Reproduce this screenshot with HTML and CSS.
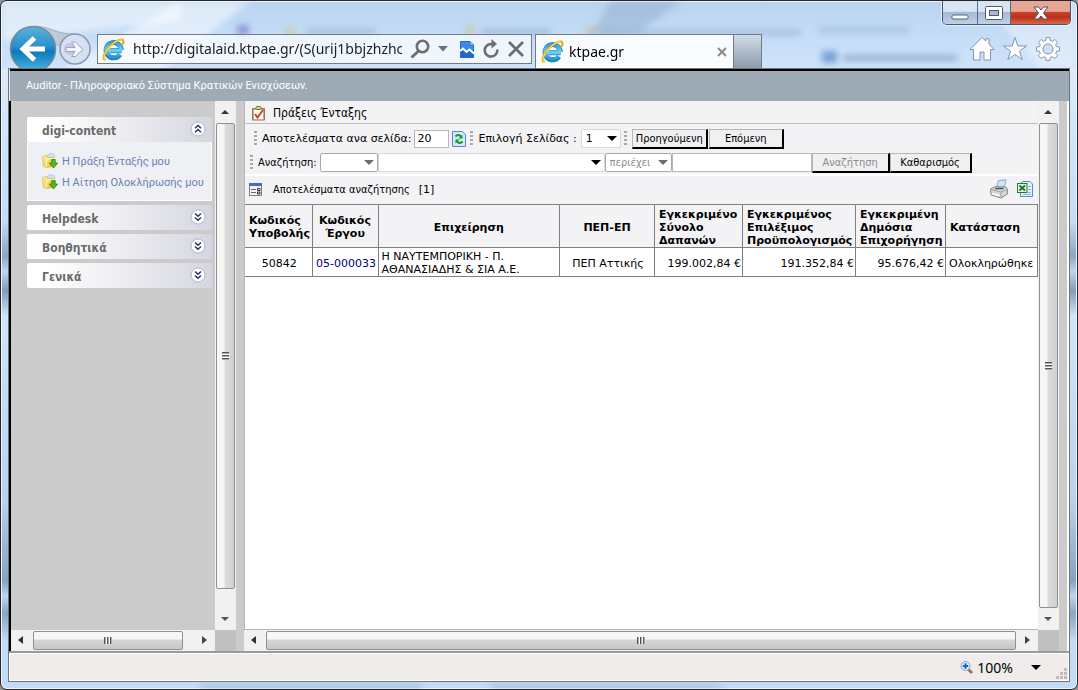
FILE: index.html
```
<!DOCTYPE html>
<html lang="el">
<head>
<meta charset="utf-8">
<title>ktpae.gr</title>
<link rel="stylesheet" href="styles.css">
</head>
<body>
<svg class="defs" aria-hidden="true">
  <defs>
    <linearGradient id="eblue" x1="0" y1="0" x2="0" y2="1"><stop offset="0" stop-color="#2f9bd8"/><stop offset=".5" stop-color="#6fd6f8"/><stop offset="1" stop-color="#2a93d4"/></linearGradient>
    <linearGradient id="folder" x1="0" y1="0" x2="1" y2="1"><stop offset="0" stop-color="#fff3a0"/><stop offset="1" stop-color="#e6b42c"/></linearGradient>
    <filter id="soft" x="-50%" y="-100%" width="200%" height="300%"><feGaussianBlur stdDeviation="3"/></filter>
    <symbol id="ie" viewBox="0 0 24 24">
      <path d="M20.4 13.3H8M20.2 12.5a8 8 0 1 0-1.4 4.8" fill="none" stroke="#1d7fc0" stroke-width="5"/>
      <path d="M20.2 13.2H8M19.8 12.5a7.7 7.7 0 1 0-1.6 4.4" fill="none" stroke="url(#eblue)" stroke-width="3.6"/>
      <path d="M8 13.2H20" fill="none" stroke="#62cdf4" stroke-width="3"/>
      <path d="M4.2 22.2C1 23.6.6 19.6 4 14 8 7.400 16.500.9 20.800 1.600 23 2 22.600 4.800 21.600 6.800" fill="none" stroke="#e9a500" stroke-width="2.200"/>
      <path d="M4.200 22C1.400 23 1.200 19.400 4.200 14.200 8 7.600 16.500 1.300 20.600 1.800" fill="none" stroke="#ffd94a" stroke-width="1.200"/>
    </symbol>
    <symbol id="folder-down" viewBox="0 0 16 16">
      <circle cx="9" cy="4.500" r="4" fill="#cfe4f5" stroke="#9fc3e2" stroke-width=".6"/>
      <path d="M.6 3.500 4.800 2.400 6 4.200 12.500 4.600 13 13 4 14.800 1.200 13Z" fill="url(#folder)" stroke="#d8ae34" stroke-width=".6"/>
      <path d="M4 14.500 5 6 13.500 5.500" fill="none" stroke="#fffbd0" stroke-width="1"/>
      <path d="M9.700 6.500H13.200V10H15.800L11.500 15 7.200 10H9.700Z" fill="#58b51c" stroke="#2f7d0c" stroke-width=".7"/>
    </symbol>
    <symbol id="chev-down" viewBox="0 0 16 16">
      <circle cx="8" cy="8" r="7" fill="#fff" stroke="#b4b4c6"/>
      <path d="M5 4.500 8 7.300 11 4.500M5 8.500 8 11.300 11 8.500" fill="none" stroke="#22336e" stroke-width="1.500"/>
    </symbol>
    <symbol id="chev-up" viewBox="0 0 16 16">
      <circle cx="8" cy="8" r="7" fill="#fff" stroke="#b4b4c6"/>
      <path d="M5 7.300 8 4.500 11 7.300M5 11.300 8 8.500 11 11.300" fill="none" stroke="#22336e" stroke-width="1.500"/>
    </symbol>
  </defs>
</svg>

<div class="window">
  <svg class="haze" aria-hidden="true">
    <g filter="url(#soft)">
      <path d="M180 0 250 0 160 70 60 70Z" fill="#fff" opacity=".5"/>
      <path d="M610 0 680 0 640 30 590 34Z" fill="#6f8db5" opacity=".3"/>
      <path d="M0 0H180V20L0 40Z" fill="#fff" opacity=".5"/>
      <path d="M980 0H1076V68H1040Z" fill="#fff" opacity=".35"/>
      <rect x="236" y="24" width="12" height="10" fill="#6a5fc0" opacity=".55"/>
      <rect x="284" y="27" width="10" height="8" fill="#cdbb6a" opacity=".5"/>
      <rect x="305" y="28" width="70" height="5" fill="#6887ab" opacity=".35"/>
      <rect x="464" y="26" width="10" height="8" fill="#c7b766" opacity=".5"/>
      <rect x="480" y="28" width="70" height="5" fill="#6887ab" opacity=".4"/>
      <rect x="584" y="26" width="12" height="8" fill="#bfae62" opacity=".45"/>
      <rect x="600" y="29" width="200" height="5" fill="#6887ab" opacity=".35"/>
      <rect x="818" y="26" width="90" height="6" fill="#6887ab" opacity=".25"/>
      <rect x="821" y="50" width="15" height="12" fill="#3f78c0" opacity=".6"/>
      <rect x="842" y="54" width="114" height="6" fill="#587ba5" opacity=".45"/>
      <rect x="200" y="684" width="220" height="4" fill="#5f7c9c" opacity=".4"/>
      <rect x="490" y="684" width="230" height="4" fill="#5f7c9c" opacity=".35"/>
    </g>
  </svg>

  <div class="caption">
    <button class="cap cap-min" aria-label="Minimize"><svg width="18" height="8"><rect x="1" y="2" width="16" height="4" rx="1" fill="#fff" stroke="#54617a"/></svg></button><button class="cap cap-max" aria-label="Maximize"><svg width="18" height="14"><rect x=".5" y=".5" width="17" height="13" rx="1" fill="#fff" stroke="#4d5a72"/><rect x="4.500" y="4.500" width="9" height="5" fill="#a6b9d0" stroke="#4d5a72"/></svg></button><button class="cap cap-close" aria-label="Close"><svg width="18" height="14" viewBox="0 0 18 14"><path d="M2 1H6.500L9 4 11.500 1H16L11.500 7 16 13H11.500L9 10 6.500 13H2L6.500 7Z" fill="#fff" stroke="#5a4a58"/></svg></button>
  </div>

  <header class="chrome">
    <svg class="nav" width="86" height="43" viewBox="0 0 86 43">
      <defs><linearGradient id="nb" x1="0" y1="0" x2="0" y2="1"><stop offset="0" stop-color="#5ab2dd"/><stop offset=".45" stop-color="#2a8fc9"/><stop offset=".55" stop-color="#0b79b9"/><stop offset="1" stop-color="#4cb4e6"/></linearGradient></defs>
      <path d="M26 1C46 3 46 9 66 9L66 20H40Z" fill="#bccada" stroke="#9fadbd"/>
      <circle cx="24" cy="24" r="22.500" fill="url(#nb)" stroke="#75889a" stroke-width="1.500"/>
      <path d="M36 24H15M25.500 13 14 24 25.500 35" fill="none" stroke="#fff" stroke-width="5"/>
      <circle cx="66" cy="24" r="15" fill="#d5e1f2" stroke="#8a99b0" stroke-width="1.500"/>
      <circle cx="61" cy="24" r="6" fill="#b4a7dc" opacity=".45"/>
      <path d="M57 22.500H66L62.500 17H66.500L74 24.500 66.500 31.500H62.500L66 26.500H57Z" fill="#f4f6fc" stroke="#9ba4bf"/>
    </svg>
    <div class="address">
      <svg width="23" height="23"><use href="#ie"/></svg>
      <input class="url" type="text" aria-label="Address" value="http://digitalaid.ktpae.gr/(S(urij1bbjzhzhc45">
      <button class="tool" aria-label="Search"><svg width="20" height="20" viewBox="0 0 20 20"><circle cx="12.500" cy="7.500" r="5.700" fill="none" stroke="#6e6e6e" stroke-width="2.600"/><path d="M8.500 12 1.500 18.500" stroke="#6e6e6e" stroke-width="3"/></svg></button>
      <button class="tool" aria-label="Show addresses"><svg width="10" height="6"><path d="M0 0H10L5 5.500Z" fill="#6e6e6e"/></svg></button>
      <button class="tool tool-page" aria-label="Compatibility view"><svg width="14" height="17" viewBox="0 0 14 17"><path d="M.5.5H10L13.500 4V16.500H.5Z" fill="#3b8ae6" stroke="#1f6ccb"/><path d="M10 .5V4H13.500" fill="#9cc5f5" stroke="#1f6ccb" stroke-width=".6"/><path d="M1 11 3.500 9 6.500 12 9.500 9.500 13 13V16H1Z" fill="#2368c4"/><path d="M0 10 3 7.500 6.500 11 9.500 8.500 14 12.500" fill="none" stroke="#fff" stroke-width="2"/></svg></button>
      <button class="tool" aria-label="Refresh"><svg width="18" height="20" viewBox="0 0 18 20"><path d="M15.300 10.500A6.300 6.300 0 1 1 9 5H11" fill="none" stroke="#6e6e6e" stroke-width="2.600"/><path d="M9.500 0 15 5 9.500 9.500Z" fill="#6e6e6e"/></svg></button>
      <button class="tool" aria-label="Stop"><svg width="16" height="16" viewBox="0 0 16 16"><path d="M1 1 15 15M15 1 1 15" stroke="#6e6e6e" stroke-width="2.800"/></svg></button>
    </div>
    <div class="tab">
      <svg width="23" height="23"><use href="#ie"/></svg>
      <span class="tab-title">ktpae.gr</span>
      <button class="tool" aria-label="Close tab"><svg width="10" height="10" viewBox="0 0 10 10"><path d="M1 1 9 9M9 1 1 9" stroke="#8b8b8b" stroke-width="2"/></svg></button>
    </div>
    <button class="newtab" aria-label="New tab"></button>
    <div class="quick">
      <svg width="26" height="26" viewBox="0 0 26 26"><path d="M13 1.500 16.800 5V2.800H20V8L25 13.500H21.500V24H15V16H11V24H4.500V13.500H1Z" fill="#fff" stroke="#8494ab"/></svg>
      <svg width="26" height="26" viewBox="0 0 26 26"><path d="M13 1.500 15.800 10H24.500L17.500 15.200 20.200 23.500 13 18.500 5.800 23.500 8.500 15.200 1.500 10H10.200Z" fill="#fff" stroke="#8494ab"/></svg>
      <svg width="26" height="26" viewBox="0 0 26 26"><g fill="#fff" stroke="#8494ab"><path d="M10.800 4.400 11 1.500H15L15.200 4.400 17.500 5.300 19.700 3.400 22.600 6.300 20.700 8.500 21.600 10.800 24.500 11V15L21.600 15.200 20.700 17.500 22.600 19.700 19.700 22.600 17.500 20.700 15.200 21.600 15 24.500H11L10.800 21.600 8.500 20.700 6.300 22.600 3.400 19.700 5.300 17.500 4.400 15.200 1.500 15V11L4.400 10.800 5.300 8.500 3.400 6.300 6.300 3.400 8.500 5.300Z"/><circle cx="13" cy="13" r="5" fill="#cfe0f5"/></g></svg>
    </div>
  </header>

  <div class="client">
    <div class="banner">Auditor - Πληροφοριακό Σύστημα Κρατικών Ενισχύσεων.</div>
    <div class="frames">
      <div class="frame frame-side">
        <nav class="side">
          <section class="panel">
            <h2 class="panel-head">digi-content<svg width="16" height="16"><use href="#chev-up"/></svg></h2>
            <div class="panel-body">
              <a href="#"><svg width="16" height="16"><use href="#folder-down"/></svg>Η Πράξη Ένταξής μου</a>
              <a href="#"><svg width="16" height="16"><use href="#folder-down"/></svg>Η Αίτηση Ολοκλήρωσής μου</a>
            </div>
          </section>
          <section class="panel"><h2 class="panel-head">Helpdesk<svg width="16" height="16"><use href="#chev-down"/></svg></h2></section>
          <section class="panel"><h2 class="panel-head">Βοηθητικά<svg width="16" height="16"><use href="#chev-down"/></svg></h2></section>
          <section class="panel"><h2 class="panel-head">Γενικά<svg width="16" height="16"><use href="#chev-down"/></svg></h2></section>
        </nav>
        <div class="vbar"><i class="arr up"></i><div class="thumb"><i class="grip"></i></div><i class="arr down gap-v"></i></div>
        <div class="hbar"><i class="arr left"></i><div class="thumb"><i class="grip"></i></div><i class="arr right gap-h"></i></div>
        <div class="corner"></div>
      </div>

      <div class="frame frame-main">
        <main class="page">
          <h1 class="title">
            <svg width="15" height="15" viewBox="0 0 15 15"><rect x="1" y="2" width="13" height="12.500" rx="1" fill="#a3762f"/><rect x="2.500" y="3.500" width="10" height="10" fill="#fff" stroke="#98a9cc" stroke-width=".6"/><rect x="5" y=".5" width="5" height="3" rx="1" fill="#e6d36e" stroke="#65804a"/><path d="M4 8 6.500 11.500 12 4" fill="none" stroke="#e0391c" stroke-width="2"/></svg>
            Πράξεις Ένταξης
          </h1>
          <div class="tools">
            <form class="bar bar-page">
              <i class="dots"></i>
              <label for="size">Αποτελέσματα ανα σελίδα:</label>
              <input class="field size" id="size" type="text" value="20">
              <button class="tool reload" type="button" aria-label="Ανανέωση"><svg width="14" height="16" viewBox="0 0 14 16"><path d="M.5.5H10.500L13.500 3.500V15.500H.5Z" fill="#d5e5fb" stroke="#5c84c8"/><path d="M3.500 5.500C5 3.500 7.500 3.500 8.800 5.500M10.500 10.500C9 12.500 6.500 12.500 5.200 10.500" fill="none" stroke="#0f9a1a" stroke-width="2"/><path d="M6.500 7.500H10.500V3.500ZM7.500 8.500H3.500V12.500Z" fill="#0f9a1a"/></svg></button>
              <i class="dots"></i>
              <label for="pg">Επιλογή Σελίδας :</label>
              <span class="pick pick-page"><select id="pg"><option>1</option></select></span>
              <i class="dots"></i>
              <button class="btn btn-prev" type="button">Προηγούμενη</button>
              <button class="btn btn-next" type="button">Επόμενη</button>
            </form>
            <form class="bar bar-search">
              <i class="dots"></i>
              <label class="narrow" for="s1">Αναζήτηση:</label>
              <span class="pick pick-op off"><select id="s1" disabled><option></option></select></span>
              <span class="pick pick-field"><select aria-label="Πεδίο"><option></option></select></span>
              <span class="pick pick-cond off"><select aria-label="Συνθήκη" disabled><option>περιέχει</option></select></span>
              <input class="field term" type="text" aria-label="Όρος">
              <button class="btn btn-find" type="button" disabled>Αναζήτηση</button>
              <button class="btn btn-clear" type="button">Καθαρισμός</button>
            </form>
          </div>
          <div class="results">
            <svg width="13" height="13" viewBox="0 0 13 13"><rect x=".5" y=".5" width="12" height="12" fill="#f4f4f4" stroke="#808080"/><rect width="13" height="3" fill="#3a6ed0"/><path d="M2 6.500H7M2 9.500H7" stroke="#666"/><path d="M8.500 5.500H11V7.500H8.500ZM8.500 9H11V11H8.500Z" fill="#fff" stroke="#333"/></svg>
            <span class="narrow">Αποτελέσματα αναζήτησης</span><span>[1]</span>
            <span class="exports">
              <svg width="20" height="20" viewBox="0 0 20 20"><path d="M7.500 9 9.500 1.500 17 .8 15 9Z" fill="#d3e6fb" stroke="#83a7d8"/><path d="M1.500 10 6.500 7.500 17 8 18.500 10.500V15L12 19 2 16Z" fill="#d5d5d5" stroke="#8c8c8c"/><path d="M1.500 10.500 12 13 18.500 10.500M12 13V18.500" fill="none" stroke="#a5a5a5"/><path d="M6 9.500H14.500" stroke="#555" stroke-width="1.500"/><path d="M3 14.500 10.500 16.500" stroke="#fff" stroke-width="1.500"/></svg>
              <svg width="16" height="16" viewBox="0 0 16 16"><path d="M5.500.5H13L15.500 3V15.500H3.500V3Z" fill="#e5f0fd" stroke="#5f8ac4"/><path d="M11 5.500H14M11 8.500H14M11 11.500H14M6 13.500H14" stroke="#8db2e2"/><rect x=".5" y="2.500" width="9.500" height="9" fill="#e4f3df" stroke="#2a7533"/><path d="M2.500 4.500 8 9.500M8 4.500 2.500 9.500" stroke="#18782a" stroke-width="1.800"/></svg>
            </span>
          </div>
          <table class="grid">
            <colgroup><col class="c1"><col class="c2"><col><col class="c4"><col class="c5"><col class="c6"><col class="c7"><col class="c8"></colgroup>
            <thead><tr>
              <th class="l">Κωδικός<br>Υποβολής</th><th>Κωδικός<br>Έργου</th><th>Επιχείρηση</th><th>ΠΕΠ-ΕΠ</th><th class="l">Εγκεκριμένο<br>Σύνολο<br>Δαπανών</th><th class="l">Εγκεκριμένος<br>Επιλέξιμος<br>Προϋπολογισμός</th><th class="l">Εγκεκριμένη<br>Δημόσια<br>Επιχορήγηση</th><th class="l">Κατάσταση</th>
            </tr></thead>
            <tbody><tr>
              <td class="c">50842</td><td class="c"><a href="#">05-000033</a></td><td>Η ΝΑΥΤΕΜΠΟΡΙΚΗ - Π.<br>ΑΘΑΝΑΣΙΑΔΗΣ &amp; ΣΙΑ Α.Ε.</td><td class="c">ΠΕΠ Αττικής</td><td class="r">199.002,84 €</td><td class="r">191.352,84 €</td><td class="r">95.676,42 €</td><td>Ολοκληρώθηκε</td>
            </tr></tbody>
          </table>
        </main>
        <div class="vbar"><i class="arr up"></i><div class="thumb"><i class="grip"></i></div><i class="arr down"></i></div>
        <div class="hbar"><i class="arr left"></i><div class="thumb"><i class="grip"></i></div><i class="arr right"></i></div>
        <div class="corner"></div>
      </div>
    </div>
    <footer class="status">
      <svg width="13" height="13" viewBox="0 0 13 13"><path d="M8 8 12 12" stroke="#a5683c" stroke-width="2.500"/><circle cx="5.500" cy="5" r="4.500" fill="#d9ecff" stroke="#8fa3ba"/><path d="M5.500 2.300V7.700M2.800 5H8.200" stroke="#1266c8" stroke-width="2"/></svg>
      <span>100%</span>
      <svg class="zoom-arrow" width="10" height="5"><path d="M0 0H10L5 5Z" fill="#000"/></svg>
      <svg class="sizer" width="11" height="11"><path d="M8 0h3v3H8zM4 4h3v3H4zM8 4h3v3H8zM0 8h3v3H0zM4 8h3v3H4zM8 8h3v3H8z" fill="#bcbcbc"/></svg>
    </footer>
  </div>
</div>
</body>
</html>
```

FILE: styles.css
```
* { box-sizing: border-box; }
body {
  margin: 0;
  background: #8f8f8f;
  font: 11px/13px "DejaVu Sans", Verdana, sans-serif;
  color: #000;
}
svg { display: block; flex: none; }
.defs { position: absolute; width: 0; height: 0; }
button, input, select { font: inherit; color: inherit; margin: 0; padding: 0; border: 0; border-radius: 0; background: none; }
a { text-decoration: none; color: inherit; }

.window {
  position: relative;
  display: flex;
  flex-direction: column;
  height: 100vh;
  padding: 1px 7px 7px;
  border: 1px solid #23262c;
  border-radius: 7px;
  overflow: hidden;
  background:
    linear-gradient(180deg, #b9d3ef 0, #c6def8 40px, #cfe2fa 68px, transparent 68px),
    linear-gradient(180deg, #dcebfb 68px, #c3dcf7 220px, #8aa6c6 255px, #bcd6f2 270px, #809cbd 290px, #d2e4f8 315px, #b8d2ee 500px, #86a2c3 580px, #bcd6f2 595px, #89a5c5 612px, #c2dbf6 640px, #c2dbf6);
  box-shadow: inset 0 0 0 1px #eef6ff;
}
.haze { position: absolute; inset: 0; width: 100%; height: 100%; pointer-events: none; }

/* Caption buttons */
.caption { position: absolute; top: 0; right: 6px; display: flex; border: 1px solid #48566c; border-top: 0; border-radius: 0 0 5px 5px; overflow: hidden; box-shadow: 0 0 0 1px #e3effb; }
.cap { display: flex; align-items: center; justify-content: center; height: 23px; background: linear-gradient(#d8e4f2 45%, #a5b9d2 50%, #bed0e6); border-right: 1px solid #5b6b84; }
.cap-min { width: 35px; padding-top: 9px; }
.cap-max { width: 33px; }
.cap-close { width: 59px; border: 0; background: linear-gradient(#e7a596 45%, #cc432c 50%, #b93019 70%, #d9674a); }

/* Browser chrome */
.chrome { position: relative; display: flex; align-items: flex-end; height: 66px; flex: none; }
.nav { margin: 0 2px 0 1px; }
.address {
  display: flex; align-items: center; gap: 8px;
  width: 435px; height: 30px; margin-bottom: 4px; padding: 0 7px 0 4px;
  border: 1px solid #737b86; background: rgba(255, 255, 255, .7);
}
.url { flex: 1; min-width: 0; height: 26px; overflow: hidden; font: 14px/26px "Noto Sans", "Segoe UI", sans-serif; color: #222; outline: 0; }
.tool { display: flex; align-items: center; justify-content: center; flex: none; }
.tool-page { margin-left: 4px; }
.tab {
  display: flex; align-items: center; gap: 5px;
  width: 199px; height: 34px; margin-left: 3px; padding: 0 6px 0 5px;
  border: 1px solid #737b86; border-bottom: 0; background: rgba(255, 255, 255, .88);
}
.tab-title { flex: 1; font: 14px/24px "Noto Sans", "Segoe UI", sans-serif; }
.newtab { width: 28px; height: 34px; border: 1px solid #737b86; border-width: 1px 1px 0 0; background: linear-gradient(#d0dce9, #8f9cab); }
.quick { display: flex; gap: 7px; margin: 0 9px 6px auto; }

/* Client area */
.client { position: relative; display: flex; flex-direction: column; flex: 1; min-height: 0; border: 1px solid #6d7580; background: #f0eceb; }
.banner { flex: none; height: 32px; padding: 8px 0 0 16px; margin-left: 1px; border-top: 2px solid #000; background: #9fabb4; color: #fff; font-family: Roboto, Tahoma, sans-serif; }
.frames { display: flex; gap: 8px; flex: 1; min-height: 0; padding-right: 8px; border-left: 2px solid #000; border-right: 2px solid #fff; background: #cbcbcb; }
.frame { display: grid; grid-template: minmax(0, 1fr) 21px / minmax(0, 1fr) 21px; }
.frame-side { width: 225px; }
.frame-main { flex: 1; min-width: 0; }
.corner { background: #c0c0c0; }

/* Scroll bars */
.vbar, .hbar { display: flex; background: #f1f1f1; }
.vbar { flex-direction: column; }
.thumb { flex: 1; display: flex; align-items: center; justify-content: center; border: 1px solid #919191; border-radius: 2px; }
.vbar .thumb { margin: 0 1px; background: linear-gradient(90deg, #f6f6f6 40%, #dcdcde 48%, #cfcfd4); }
.hbar .thumb { margin: 1px 0; background: linear-gradient(#f6f6f6 40%, #d6d6d8 48%, #c6c6c8); }
.arr { display: flex; align-items: center; justify-content: center; flex: none; width: 20px; height: 20px; }
.hbar .arr { width: 22px; }
.vbar .arr { height: 22px; }
.hbar .left { padding-right: 3px; }
.arr::before { content: ""; border: 4px solid transparent; }
.arr.up::before { border-top: 0; border-bottom-color: #333; }
.arr.down::before { border-bottom: 0; border-top-color: #555; }
.arr.left::before { border-left: 0; border-right: 5px solid #333; }
.arr.right::before { border-right: 0; border-left: 5px solid #444; }
.gap-v { margin-top: 19px; }
.gap-h { margin-left: 10px; }
.vbar .grip { width: 7px; height: 8px; background: repeating-linear-gradient(#555 0 1px, #aaa 1px 2px, #fff 2px 3px); }
.hbar .grip { width: 8px; height: 7px; background: repeating-linear-gradient(90deg, #555 0 1px, #aaa 1px 2px, #fff 2px 3px); }

/* Side menu */
.side { display: flex; flex-direction: column; gap: 4px; padding: 16px 3px 0 16px; overflow: hidden; background: #cbcbcb; }
.panel-head {
  display: flex; align-items: center; justify-content: space-between;
  height: 25px; margin: 0; padding: 3px 6px 1px 15px; border-radius: 2px;
  background: linear-gradient(90deg, #fff 10%, #d6d6e0);
  color: #6b6b6b; font: bold 12px/16px "DejaVu Sans Condensed", Tahoma, sans-serif;
}
.panel-head svg { margin-bottom: 4px; }
.panel-body { display: flex; flex-direction: column; gap: 5px; padding: 11px 0 10px 14px; border: 1px solid #fff; border-top: 0; background: #eff0f4; white-space: nowrap; font-family: Roboto, Tahoma, sans-serif; }
.panel-body a { display: flex; align-items: center; gap: 4px; color: #6b7fb3; }

/* Main page */
.page { overflow: hidden; border-left: 1px solid #b5b5b5; border-bottom: 1px solid #b5b5b5; background: #fff; }
.title { display: flex; align-items: center; gap: 7px; height: 23px; margin: 0; padding: 2px 6px 0; border-bottom: 1px solid #bdbdbd; background: #f3f3f5; font: 12px/16px "DejaVu Sans Condensed", Tahoma, sans-serif; }
.tools { display: flex; flex-direction: column; gap: 3px; padding: 4px 6px 1px; background: #f3f3f5; border-bottom: 2px solid #fff; }
.bar { display: flex; align-items: center; height: 21px; margin: 0; white-space: nowrap; }
.bar-page { padding-left: 3px; }
.dots { flex: none; width: 3px; height: 15px; margin-right: 5px; background: repeating-linear-gradient(#a8a8ac 0 2px, transparent 2px 4px); }
.narrow { font-family: "DejaVu Sans Condensed", Tahoma, sans-serif; }
.field { flex: none; height: 18px; padding: 0 2px; border: 1px solid #b5b8bd; background: #fff; }
.size { width: 35px; margin-left: 3px; }
.reload { margin: 0 4px 0 3px; }
.pick { position: relative; display: flex; flex: none; height: 19px; border: 1px solid #d5d9e0; border-radius: 2px; background: #fff; }
.pick select { appearance: none; width: 100%; padding-left: 4px; opacity: 1; background: transparent; }
.pick::after { content: ""; position: absolute; right: 3px; top: 6px; border: 5px solid transparent; border-top-color: #000; border-bottom: 0; }
.off { border-color: #a9a9a9; color: #8a8a8a; font-family: "DejaVu Sans Condensed", Tahoma, sans-serif; }
.off::after { border-top-color: #6d6d6d; }
.pick-page { width: 40px; margin: 0 3px 0 4px; }
.pick-op { width: 58px; margin-left: 3px; }
.pick-field { width: 227px; }
.pick-cond { width: 67px; }
.bar-search { margin-left: -1px; }
.term { width: 140px; height: 19px; }
.btn { flex: none; height: 20px; border: 1px solid; border-width: 1px 2px 2px 1px; border-color: #b5b5b5 #000 #000 #b5b5b5; background: #f0f0f2; font-family: "DejaVu Sans Condensed", Tahoma, sans-serif; }
.btn:disabled { color: #8a8a8a; }
.btn-prev { width: 76px; margin-right: 1px; }
.btn-next { width: 75px; }
.btn-find { width: 78px; }
.btn-clear { width: 82px; }
.results { display: flex; align-items: center; gap: 9px; height: 28px; padding: 0 5px 2px 4px; background: #f3f3f5; }
.results svg + .narrow { margin-left: 2px; }
.exports { display: flex; align-items: center; gap: 8px; margin-left: auto; }
.grid { width: 100%; table-layout: fixed; border-collapse: collapse; white-space: nowrap; }
.grid th, .grid td { padding: 2px 3px 0; border: 1px solid #808080; }
.grid tr > :first-child { border-left: 0; }
.grid th { height: 43px; background: #f3f3f5; }
.grid td { height: 29px; padding: 2px 1px 0 3px; }
.grid .c1 { width: 67px; }
.grid .c2 { width: 66px; }
.grid .c4 { width: 95px; }
.grid .c5 { width: 88px; }
.grid .c6 { width: 113px; }
.grid .c7 { width: 90px; }
.grid .c8 { width: 92px; }
.grid .l { text-align: left; padding: 2px 0 0 4px; }
.grid .r { text-align: right; }
.grid .c { text-align: center; }
.grid a { color: #00007a; }

/* Status bar */
.status { display: flex; align-items: center; flex: none; height: 30px; padding: 1px 2px 0 0; gap: 4px; justify-content: flex-end; border-top: 2px solid #9a9a9a; box-shadow: inset 0 0 0 1px #fff; font: 14px/20px "Noto Sans", "Segoe UI", sans-serif; }
.zoom-arrow { margin-left: 14px; }
.sizer { margin-left: 11px; align-self: flex-end; margin-bottom: 2px; }
```
